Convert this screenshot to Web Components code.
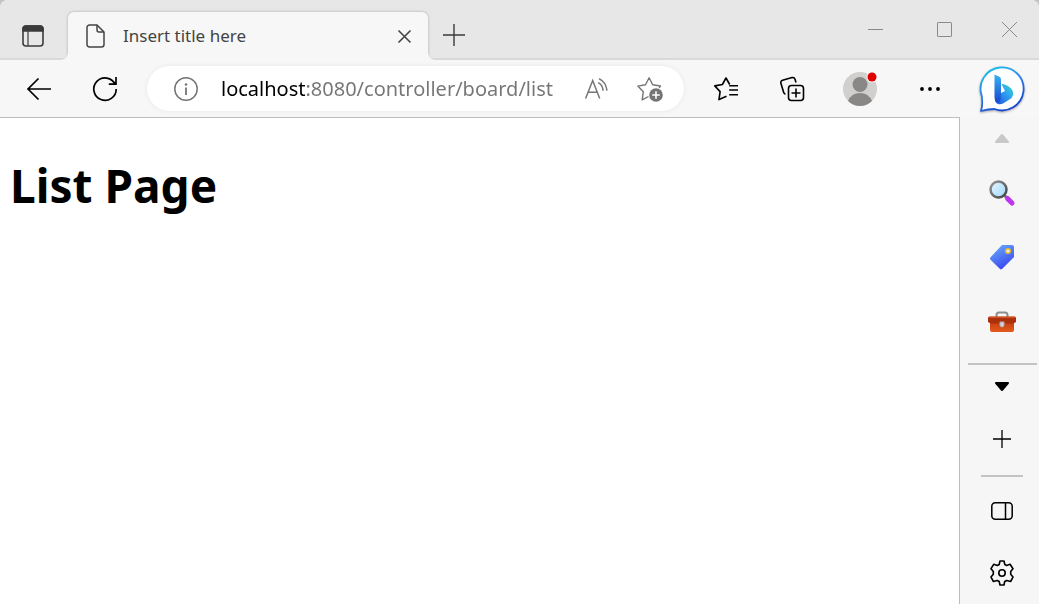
<!DOCTYPE html>
<html lang="en">
<head>
  <meta charset="UTF-8">
  <meta name="viewport" content="width=device-width, initial-scale=1.0">
  <title>Insert title here</title>
  <style>
    body { margin: 0; background: #c4c4c4; font-family: "Noto Sans", "Open Sans", sans-serif; }
  </style>
</head>
<body>
  <browser-window>
    <tab-strip slot="tabs">
      <browser-tab>Insert title here</browser-tab>
    </tab-strip>
    <tool-bar slot="toolbar"></tool-bar>
    <page-view>
      <h1>List Page</h1>
    </page-view>
    <side-bar slot="sidebar"></side-bar>
  </browser-window>

  <template id="window-template">
    <style>
      :host { display: flex; flex-direction: column; min-height: 100vh; border-radius: 8px 8px 0 0; overflow: hidden; background: #f7f7f7; }
      .content { display: flex; flex: 1; }
    </style>
    <slot name="tabs"></slot>
    <slot name="toolbar"></slot>
    <div class="content">
      <slot></slot>
      <slot name="sidebar"></slot>
    </div>
  </template>

  <template id="button-template">
    <style>
      :host { display: flex; flex: none; }
      button { display: flex; flex: 1; align-items: center; justify-content: center; padding: 0; border: 0; background: none; color: inherit; font: inherit; }
      ::slotted(svg) { display: block; fill: none; stroke: currentColor; overflow: visible; }
    </style>
    <button type="button"><slot></slot></button>
  </template>

  <template id="tabs-template">
    <style>
      :host { display: flex; height: 60px; overflow: hidden; background: #e7e7e7; box-shadow: inset 0 -2px #d9d9d9; color: #3b3b3b; }
      .menu { width: 66px; padding-top: 12px; }
      .tabs { display: flex; padding: 12px 0 0 2px; }
      .add { width: 52px; padding-top: 10px; }
      .controls { display: flex; height: 58px; margin-left: auto; color: #8a8a8a; }
      .controls icon-button { width: 69px; }
      .controls icon-button:last-child { width: 60px; }
    </style>
    <icon-button class="menu" label="Tab actions menu">
      <svg width="22" height="22" stroke-width="1.6">
        <rect x="1" y="1" width="20" height="20" rx="3"/>
        <path d="M1 6V4a3 3 0 0 1 3-3h14a3 3 0 0 1 3 3v2z" fill="currentColor"/>
        <path d="M6 6v15" stroke-width="1.2"/>
      </svg>
    </icon-button>
    <div class="tabs"><slot></slot></div>
    <icon-button class="add" label="New tab">
      <svg width="22" height="22" stroke-width="1.4"><path d="M11 0v22M0 11h22"/></svg>
    </icon-button>
    <div class="controls">
      <icon-button label="Minimize"><svg width="15" height="15"><path d="M0 7.5h15"/></svg></icon-button>
      <icon-button label="Maximize"><svg width="15" height="15"><rect x=".5" y=".5" width="14" height="14" rx=".6"/></svg></icon-button>
      <icon-button label="Close"><svg width="15" height="15"><path d="M0 0l15 15M15 0L0 15"/></svg></icon-button>
    </div>
  </template>

  <template id="tab-template">
    <style>
      :host { display: flex; align-items: center; position: relative; width: 360px; box-sizing: border-box; padding-left: 18px; border-radius: 6px 6px 0 0; background: #f7f7f7; box-shadow: 0 0 3px #0004; font-size: 17px; line-height: 24px; color: #444; }
      :host::before, :host::after { content: ""; position: absolute; bottom: 0; width: 6px; height: 6px; }
      :host::before { right: 100%; background: radial-gradient(circle at 0 0, transparent 5px, #f7f7f7 6px); }
      :host::after { left: 100%; background: radial-gradient(circle at 100% 0, transparent 5px, #f7f7f7 6px); }
      .file { flex: none; margin-right: 18px; fill: none; stroke: currentColor; }
      .title { flex: 1; }
      icon-button { width: 48px; height: 48px; }
    </style>
    <svg class="file" width="19" height="24" stroke-width="1.5" stroke-linejoin="round">
      <path d="M3.500 1H11l7 7v12.500a2.500 2.500 0 0 1-2.500 2.500h-12A2.500 2.500 0 0 1 1 20.500v-17A2.500 2.500 0 0 1 3.500 1z"/>
      <path d="M11 1v5a2 2 0 0 0 2 2h5"/>
    </svg>
    <span class="title"><slot></slot></span>
    <icon-button label="Close tab"><svg width="13" height="13" stroke-width="1.6"><path d="M.5.5l12 12M12.500.5l-12 12"/></svg></icon-button>
  </template>

  <template id="toolbar-template">
    <style>
      :host { display: flex; align-items: center; height: 57px; padding-left: 6px; background: #f7f7f7; color: #000; }
      icon-button { width: 66px; height: 54px; }
      .wide { width: 70px; }
      .bing { width: 74px; }
      address-bar { flex: 1; margin: 0 9px; }
    </style>
    <icon-button label="Back"><svg width="24" height="22" stroke-width="1.7"><path d="M24 11H1M11.500.5L1 11l10.500 10.500"/></svg></icon-button>
    <icon-button label="Refresh">
      <svg width="24" height="24" stroke-width="1.7"><path d="M22.200 7.500A11.200 11.200 0 1 0 23.200 12M23 0v7.200h-7.200"/></svg>
    </icon-button>
    <address-bar></address-bar>
    <icon-button label="Favorites">
      <svg width="24" height="24" stroke-width="1.6" stroke-linejoin="round">
        <path d="M12.500 19.200L5 22.600l1.100-8L.8 8.900l7.600-1.400L12 1l3.700 6.500M15.200 8.700H24M15.200 13H24M15.200 17.700H24"/>
      </svg>
    </icon-button>
    <icon-button label="Collections">
      <svg width="24" height="24" stroke-width="1.6" stroke-linejoin="round">
        <rect x="8.500" y="8.500" width="15" height="15" rx="3"/>
        <path d="M16 11.500v9M11.500 16h9M5.500 17.200a3 3 0 0 1-1.900-2L.9 6.300a2.500 2.500 0 0 1 1.700-3.100L12 .6a2.500 2.500 0 0 1 3 1.700L16 5.600"/>
      </svg>
    </icon-button>
    <icon-button class="wide" label="Profile">
      <svg width="34" height="34">
        <g stroke="none">
          <circle cx="17" cy="17" r="17" fill="#d2d0ce"/>
          <circle cx="17" cy="12.500" r="7.500" fill="#8a8886"/>
          <path d="M5 29a13 13 0 0 1 24 0 17 17 0 0 1-24 0z" fill="#8a8886"/>
          <circle cx="29" cy="5" r="5.500" fill="#f7f7f7"/>
          <circle cx="29" cy="5" r="4.500" fill="#e00000"/>
        </g>
      </svg>
    </icon-button>
    <icon-button class="wide" label="Settings and more">
      <svg width="20" height="4"><g fill="currentColor" stroke="none"><circle cx="2" cy="2" r="1.900"/><circle cx="10" cy="2" r="1.900"/><circle cx="18" cy="2" r="1.900"/></g></svg>
    </icon-button>
    <icon-button class="bing" label="Discover">
      <svg width="46" height="46">
        <defs>
          <linearGradient id="ring" x1="0" y1="0" x2=".5" y2="1"><stop stop-color="#19d0e8"/><stop offset=".5" stop-color="#2b83ee"/><stop offset="1" stop-color="#1749d0"/></linearGradient>
          <linearGradient id="stem" x1="0" y1="0" x2="0" y2="1"><stop stop-color="#37b4f2"/><stop offset="1" stop-color="#1746d2"/></linearGradient>
          <linearGradient id="bowl" x1="0" y1="1" x2="1" y2="0"><stop stop-color="#1d50dc"/><stop offset=".6" stop-color="#2fa4f0"/><stop offset="1" stop-color="#35dfc4"/></linearGradient>
        </defs>
        <path d="M2 45Q4 39 2.800 30A21.500 21.500 0 1 1 15.500 43Q9 43 2 45z" fill="#fff" stroke="url(#ring)" stroke-width="1.800" stroke-linejoin="round" style="filter: drop-shadow(0 1px 1px #0005)"/>
        <path d="M16 33.500c0-2 2-4 6-6.500l4-2-3.500-7c3 0 6 1.500 8.500 3.500 4 3 4 8 1 11l-8 5c-4 2-8 0-8-4z" fill="url(#bowl)" stroke="none"/>
        <path d="M15.500 8.500l4.500 2q2 1 2 3v16c0 4-1 6-2.500 7-2.500 0-4-2-4-5z" fill="url(#stem)" stroke="none"/>
      </svg>
    </icon-button>
  </template>

  <template id="address-template">
    <style>
      :host { display: flex; align-items: center; height: 45px; box-sizing: border-box; padding: 0 7px 0 12px; border-radius: 23px; background: #fff; box-shadow: 0 0 5px #0001; color: #757575; }
      icon-button { width: 54px; height: 44px; }
      /* host name in black, the rest of the address in grey */
      input { flex: 1; min-width: 0; height: 32px; margin-left: 8px; padding: 0; border: 0; outline: 0; font: 20px/32px "Noto Sans", "Open Sans", sans-serif; color: transparent; background: linear-gradient(to right, #000 84px, #757575 84px); -webkit-background-clip: text; background-clip: text; }
    </style>
    <icon-button label="View site information">
      <svg width="24" height="24" stroke-width="1.5"><circle cx="12" cy="12" r="11.200"/><path d="M12 10.500V18" stroke-width="1.800"/><circle cx="12" cy="7.500" r="1.300" fill="currentColor" stroke="none"/></svg>
    </icon-button>
    <input type="text" aria-label="Address and search bar" value="localhost:8080/controller/board/list" spellcheck="false">
    <icon-button label="Read aloud">
      <svg width="23" height="22" stroke-width="1.5"><path d="M.6 20.500L7.700 2.500l7 18M3 14.300h9.400M14 .6q7 3.400 8 12M13.200 4.700q4.600 2.500 4.900 8"/></svg>
    </icon-button>
    <icon-button label="Add this page to favorites">
      <svg width="26" height="24" stroke-width="1.4" stroke-linejoin="round">
        <path d="M11.500 19.500l-6.300 3.400 1.100-8.200L.8 9.100l7.700-1.400L12.100.8l3.600 6.900 7.700 1.300-1.200 1.800"/>
        <circle cx="19" cy="18" r="6.800" fill="currentColor" stroke="none"/><path d="M19 14.200v7.600M15.200 18h7.600" stroke="#fff" stroke-width="1.600"/>
      </svg>
    </icon-button>
  </template>

  <template id="page-template">
    <style>
      :host { display: block; flex: 1; box-sizing: border-box; padding: 32px 10px; border: solid #bdbdbd; border-width: 1px 1px 0 0; background: #fff; color: #000; }
      ::slotted(h1) { margin: 0; font: bold 46px/70px "Noto Sans", "Open Sans", sans-serif; }
    </style>
    <slot></slot>
  </template>

  <template id="sidebar-template">
    <style>
      :host { display: flex; flex-direction: column; width: 74px; padding-left: 5px; background: #f6f6f6; color: #000; }
      icon-button { height: 64px; }
      .scroll { height: 42px; }
      .up { margin-bottom: 2px; }
      hr { width: 69px; box-sizing: border-box; height: 2px; margin: 10px 0 0 3px; border: 0; background: #c3c3c3; }
      .short { width: 42px; margin: 4px auto 3px; }
      .bottom icon-button { height: 62px; }
    </style>
    <icon-button class="scroll up" label="Scroll up"><svg width="14" height="9"><path d="M7 1L13 8H1z" fill="#c8c8c8" stroke="#c8c8c8" stroke-width="2" stroke-linejoin="round"/></svg></icon-button>
    <icon-button label="Search">
      <svg width="26" height="26">
        <defs>
          <linearGradient id="glass" x1="0" y1="0" x2="1" y2="1"><stop stop-color="#eaf7ff"/><stop offset="1" stop-color="#9bd6fc"/></linearGradient>
          <linearGradient id="rim" x1="0" y1="0" x2="1" y2="1"><stop stop-color="#989898"/><stop offset="1" stop-color="#3e4043"/></linearGradient>
        </defs>
        <path d="M15.500 15.500l3 3" stroke="#777" stroke-width="3"/>
        <path d="M18.500 18.500l4.500 4.500" stroke="#bd35f1" stroke-width="5" stroke-linecap="round"/>
        <circle cx="9.500" cy="9.500" r="8" fill="url(#glass)" stroke="url(#rim)" stroke-width="2.500"/>
      </svg>
    </icon-button>
    <icon-button label="Shopping">
      <svg width="24" height="24">
        <defs><linearGradient id="tag" x1=".2" y1="0" x2=".7" y2="1"><stop stop-color="#68aaf8"/><stop offset="1" stop-color="#3742f0"/></linearGradient></defs>
        <path d="M12 0h10a2 2 0 0 1 2 2v10L12.500 23.500a2 2 0 0 1-3 0L.8 15a2 2 0 0 1 0-3z" fill="url(#tag)" stroke="none"/>
        <circle cx="18" cy="6" r="2.300" fill="#e5f1ff" stroke="#efb91f" stroke-width="1.500"/>
      </svg>
    </icon-button>
    <icon-button label="Tools">
      <svg width="28" height="21">
        <defs><linearGradient id="box" x1="0" y1="0" x2="0" y2="1"><stop stop-color="#c43b12"/><stop offset="1" stop-color="#e45a1b"/></linearGradient></defs>
        <path d="M8.500 6V4a2.500 2.500 0 0 1 2.500-2.500h6A2.500 2.500 0 0 1 19.500 4v2" stroke="#8b8d90" stroke-width="2"/>
        <path d="M2 10h24v9a2 2 0 0 1-2 2H4a2 2 0 0 1-2-2z" fill="url(#box)" stroke="none"/>
        <path d="M1.500 5.500h25q1.500 0 1.500 1.500v3.500q-1 2-5 2H5q-4 0-5-2V7q0-1.500 1.500-1.500z" fill="#ad300d" stroke="none"/>
        <path d="M1 6.200h26" stroke="#e2622b"/>
        <path d="M12 11h4v3q0 2-2 2t-2-2z" fill="#d4d8dc" stroke="#a8acb0"/>
      </svg>
    </icon-button>
    <hr>
    <icon-button class="scroll" label="Scroll down"><svg width="14" height="9"><path d="M1 1h12L7 8z" fill="currentColor" stroke-width="2" stroke-linejoin="round"/></svg></icon-button>
    <icon-button label="Customize"><svg width="18" height="18" stroke-width="1.300"><path d="M9 0v18M0 9h18"/></svg></icon-button>
    <hr class="short">
    <div class="bottom">
      <icon-button label="Hide sidebar"><svg width="22" height="18" stroke-width="1.500"><rect x=".8" y=".8" width="20.400" height="16.400" rx="3.500"/><path d="M14.500 1v16"/></svg></icon-button>
      <icon-button label="Settings">
        <svg width="24" height="26" stroke-width="1.600" stroke-linejoin="round">
          <path d="M10 1h4l.8 3.500 1.800 1 3.500-1.200 2.900 4.400-2.300 2.800v2.800l2.300 2.800-2.400 4.400-3.900-1-2 1L14 25h-4l-.8-3.500-2-1-3.800 1L1 17.100l2.300-2.800v-2.800L1 8.700l2.700-4.400 3.700 1.200 1.800-1z"/>
          <circle cx="12" cy="13" r="3.200"/>
        </svg>
      </icon-button>
    </div>
  </template>

  <script>
    // attach an open shadow root holding a copy of the template
    function fill(host, id) {
      const root = host.attachShadow({ mode: 'open' });
      root.append(document.getElementById(id).content.cloneNode(true));
      return root;
    }

    class IconButton extends HTMLElement {
      connectedCallback() {
        if (this.shadowRoot) return;
        const button = fill(this, 'button-template').querySelector('button');
        button.setAttribute('aria-label', this.getAttribute('label'));
      }
    }
    customElements.define('icon-button', IconButton);

    // the remaining elements only need their template
    function define(name, id) {
      customElements.define(name, class extends HTMLElement {
        connectedCallback() {
          if (!this.shadowRoot) fill(this, id);
        }
      });
    }

    define('browser-tab', 'tab-template');
    define('tab-strip', 'tabs-template');
    define('address-bar', 'address-template');
    define('tool-bar', 'toolbar-template');
    define('page-view', 'page-template');
    define('side-bar', 'sidebar-template');
    define('browser-window', 'window-template');
  </script>
</body>
</html>
